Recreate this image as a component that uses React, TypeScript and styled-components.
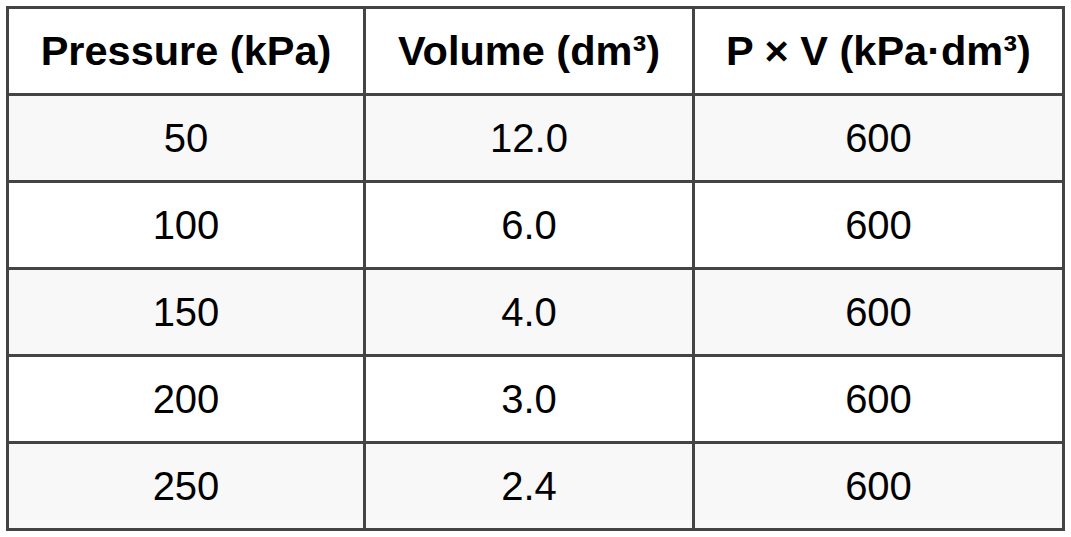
import styled, { createGlobalStyle } from 'styled-components';

const GlobalStyle = createGlobalStyle`
    html, body {
        margin: 0;
        padding: 0;
        background: #ffffff;
    }
    body {
        font-family: "Liberation Sans", Arial, sans-serif;
        color: #000000;
    }
`;

const rows: [string, string, string][] = [
    ['50', '12.0', '600'],
    ['100', '6.0', '600'],
    ['150', '4.0', '600'],
    ['200', '3.0', '600'],
    ['250', '2.4', '600'],
];

const headers = ['Pressure (kPa)', 'Volume (dm³)', 'P × V (kPa·dm³)'];
const widths = [357, 329, 370];

const Page = styled.div`
    padding: 6px;
`;

const Table = styled.table`
    border-collapse: separate;
    border-spacing: 0;
    table-layout: fixed;
    border-top: 3px solid #444444;
    border-left: 3px solid #444444;
`;

const Row = styled.tr<{ $shaded?: boolean }>`
    background: ${({ $shaded }) => ($shaded ? '#f8f8f8' : '#ffffff')};
`;

const HeadCell = styled.th`
    height: 84px;
    padding: 0;
    border-right: 3px solid #444444;
    border-bottom: 3px solid #444444;
    font-size: 41.5px;
    font-weight: 700;
    text-align: center;
    vertical-align: middle;
    white-space: nowrap;
`;

const Cell = styled.td`
    height: 84px;
    padding: 0;
    border-right: 3px solid #444444;
    border-bottom: 3px solid #444444;
    font-size: 40px;
    text-align: center;
    vertical-align: middle;
`;

const App: React.FC = () => {
    return (
        <Page>
            <GlobalStyle />
            <Table>
                <colgroup>
                    {widths.map((w, idx) => (
                        <col key={idx} style={{ width: w }} />
                    ))}
                </colgroup>
                <thead>
                    <Row>
                        {headers.map((h, idx) => (
                            <HeadCell key={idx}>{h}</HeadCell>
                        ))}
                    </Row>
                </thead>
                <tbody>
                    {rows.map((r, idx) => (
                        <Row key={idx} $shaded={idx % 2 === 0}>
                            {r.map((v, j) => (
                                <Cell key={j}>{v}</Cell>
                            ))}
                        </Row>
                    ))}
                </tbody>
            </Table>
        </Page>
    );
};

export default App;
